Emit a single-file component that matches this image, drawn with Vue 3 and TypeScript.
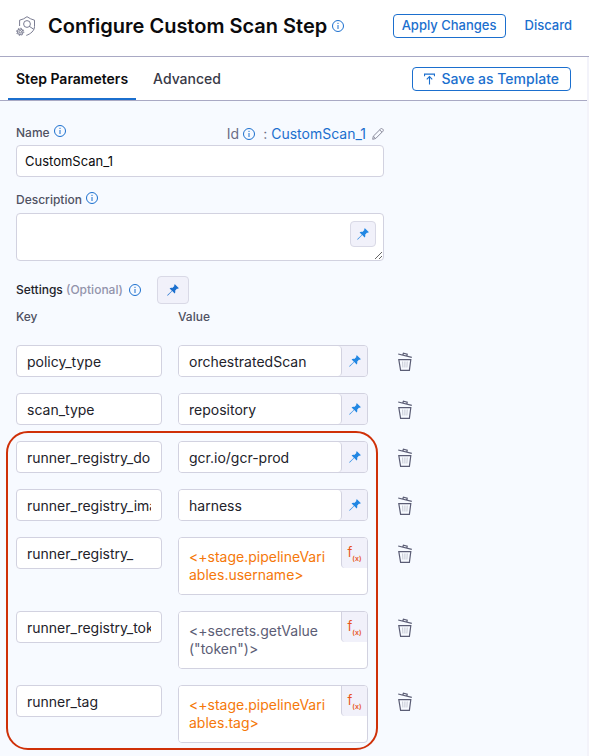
<script setup lang="ts">
import { ref } from 'vue'

type Kind = 'fixed' | 'expression' | 'secret'

interface Setting {
  id: string
  name: string
  value: string
  kind: Kind
}

const name = ref('CustomScan_1')
const description = ref('')
const activeTab = ref('Step Parameters')
const tabs = ['Step Parameters', 'Advanced']

const groups = ref<{ marked: boolean; items: Setting[] }[]>([
  {
    marked: false,
    items: [
      { id: 's1', name: 'policy_type', value: 'orchestratedScan', kind: 'fixed' },
      { id: 's2', name: 'scan_type', value: 'repository', kind: 'fixed' },
    ],
  },
  {
    marked: true,
    items: [
      { id: 's3', name: 'runner_registry_do', value: 'gcr.io/gcr-prod', kind: 'fixed' },
      { id: 's4', name: 'runner_registry_image', value: 'harness', kind: 'fixed' },
      { id: 's5', name: 'runner_registry_', value: '<+stage.pipelineVariables.username>', kind: 'expression' },
      { id: 's6', name: 'runner_registry_token', value: '<+secrets.getValue\n("token")>', kind: 'secret' },
      { id: 's7', name: 'runner_tag', value: '<+stage.pipelineVariables.tag>', kind: 'expression' },
    ],
  },
])

function removeSetting(id: string): void {
  groups.value.forEach((g) => {
    g.items = g.items.filter((s) => s.id !== id)
  })
}
</script>

<template>
  <svg class="defs" aria-hidden="true">
    <symbol id="i-info" viewBox="0 0 12 12">
      <circle cx="6" cy="6" r="5.5" fill="none" stroke="currentColor" />
      <path d="M6 5v4M6 2.8v1.2" fill="none" stroke="currentColor" />
    </symbol>
    <symbol id="i-pin" viewBox="0 0 12 12">
      <path
        fill="currentColor"
        d="M7.9 0.3 11.7 4.1 11 4.9 10.1 4.6 8.1 6.7C8.5 7.8 8.3 8.7 7.6 9.4L5.3 7.1 0.9 11.6 0.2 11.8 0.4 11.1 4.9 6.7 2.6 4.4C3.3 3.7 4.2 3.5 5.3 3.9L7.4 1.9 7.1 1Z"
      />
    </symbol>
    <symbol id="i-trash" viewBox="0 0 16 20">
      <path
        fill="none"
        stroke="currentColor"
        stroke-width="1.2"
        d="M1.2 2 14.8 5.4M5.8 3 6.4 1.200 10.200 2.200 9.800 4M1.800 7.600H13.800L12.400 18.400H3.600Z"
      />
      <path fill="none" stroke="currentColor" stroke-width="0.8" opacity="0.4" d="M5.600 9.500 5.900 15.500M7.900 9.500V15.500M10.200 9.500 9.900 15.500" />
    </symbol>
  </svg>

  <main class="page">
    <header class="header">
      <svg class="step-icon" viewBox="0 0 20 20" fill="none" stroke="#6b6d85" stroke-width="0.9" aria-hidden="true">
        <path d="M3.6 10V4.2Q8 3.2 11 0.7Q14.500 3.200 18.500 4.200V10.500C18.500 14.800 14.500 18 10.300 19.400" />
        <circle cx="11" cy="8" r="3.400" />
        <path d="M13.400 10.400 17.800 13.300" />
        <circle cx="4.200" cy="15.800" r="1.300" />
        <circle cx="4.200" cy="15.800" r="2.800" />
        <circle cx="4.200" cy="15.800" r="3.600" stroke-dasharray="1.400 1.400" />
      </svg>
      <h1 class="title">Configure Custom Scan Step</h1>
      <svg class="info" aria-hidden="true"><use href="#i-info" /></svg>
      <div class="actions">
        <button type="button" class="btn">Apply Changes</button>
        <button type="button" class="link-btn">Discard</button>
      </div>
    </header>

    <div class="body">
      <nav class="tabs">
        <button
          v-for="tab in tabs"
          :key="tab"
          type="button"
          class="tab"
          :class="{ active: activeTab === tab }"
          @click="activeTab = tab"
        >
          {{ tab }}
        </button>
        <button type="button" class="btn save">
          <svg class="up" viewBox="0 0 12 12" fill="none" stroke="currentColor" stroke-width="1.2" aria-hidden="true">
            <path d="M0.600 3V0.700H11.400V3M6 12V3.500M3 6.300 6 3.300 9 6.300" />
          </svg>
          Save as Template
        </button>
      </nav>

      <form class="form" @submit.prevent>
        <div class="name-head">
          <label class="label" for="name">Name</label>
          <svg class="info" aria-hidden="true"><use href="#i-info" /></svg>
          <div class="ident">
            <span>Id</span>
            <svg class="info" aria-hidden="true"><use href="#i-info" /></svg>
            <span class="colon">:</span>
            <a href="#name">{{ name }}</a>
            <button type="button" class="bare" aria-label="Edit Id">
              <svg class="pencil" viewBox="0 0 12 12" fill="none" stroke="#8a8b9c" aria-hidden="true">
                <path d="M0.700 11.300 1.300 8.200 8.500 1C9.200 0.300 10 0.400 10.600 1C11.400 1.700 11.600 2.500 10.900 3.300L3.700 10.500ZM7.700 1.900 10 4.200M1.500 8.400 3.500 10.300" />
              </svg>
            </button>
          </div>
        </div>
        <input id="name" v-model="name" class="box name" type="text" />

        <div class="desc-head">
          <label class="label" for="description">Description</label>
          <svg class="info" aria-hidden="true"><use href="#i-info" /></svg>
        </div>
        <div class="desc">
          <textarea id="description" v-model="description" class="box area"></textarea>
          <button type="button" class="pin small" aria-label="Description input type">
            <svg class="pin-icon" aria-hidden="true"><use href="#i-pin" /></svg>
          </button>
        </div>

        <div class="settings-head">
          <h2 class="label strong">Settings <span class="optional">(Optional)</span></h2>
          <svg class="info" aria-hidden="true"><use href="#i-info" /></svg>
          <button type="button" class="pin" aria-label="Settings input type">
            <svg class="pin-icon dark" aria-hidden="true"><use href="#i-pin" /></svg>
          </button>
        </div>

        <div class="row columns">
          <span class="label">Key</span>
          <span class="label">Value</span>
        </div>

        <div v-for="(group, g) in groups" :key="g" class="group" :class="{ marked: group.marked }">
          <div v-for="item in group.items" :key="item.id" class="row">
            <input v-model="item.name" class="box key" type="text" aria-label="Key" />
            <div class="value" :class="item.kind">
              <input v-if="item.kind === 'fixed'" v-model="item.value" type="text" aria-label="Value" />
              <textarea v-else v-model="item.value" rows="2" spellcheck="false" aria-label="Value"></textarea>
              <button type="button" class="mode" aria-label="Value input type">
                <svg v-if="item.kind === 'fixed'" class="pin-icon" aria-hidden="true"><use href="#i-pin" /></svg>
                <span v-else class="fx">f<sub>(x)</sub></span>
              </button>
            </div>
            <button type="button" class="bare trash" aria-label="Remove setting" @click="removeSetting(item.id)">
              <svg aria-hidden="true"><use href="#i-trash" /></svg>
            </button>
          </div>
        </div>
      </form>
    </div>
  </main>
</template>

<style>
body {
  background: #f7faff;
}
</style>

<style scoped>
.page,
.page button,
.page input,
.page textarea {
  font-family: Inter, 'Liberation Sans', sans-serif;
  box-sizing: border-box;
}
.page {
  color: #22222a;
}
button {
  margin: 0;
  cursor: pointer;
}
.defs {
  display: none;
}
.header {
  display: flex;
  align-items: center;
  height: 57px;
  padding: 0 17px 4px 16px;
  box-sizing: border-box;
  background: #fff;
  border-bottom: 1px solid #a9a9c4;
}
.step-icon {
  width: 20px;
  height: 20px;
  flex: none;
}
.title {
  margin: 0 5px 0 12px;
  font-size: 20px;
  line-height: 28px;
  font-weight: 600;
  color: #0b0b0d;
  white-space: nowrap;
}
.info {
  width: 12px;
  height: 12px;
  flex: none;
  color: #1b6fce;
}
.actions {
  display: flex;
  align-items: center;
  gap: 19px;
  margin-left: auto;
}
.btn,
.link-btn {
  display: flex;
  align-items: center;
  justify-content: center;
  height: 24px;
  padding: 0 8px 2px;
  font-size: 13px;
  line-height: 16px;
  font-weight: 500;
  color: #1b6fce;
  background: #fff;
  border: 1px solid #1b6fce;
  border-radius: 4px;
  white-space: nowrap;
}
.link-btn {
  border: 0;
  padding: 0 0 2px;
}
.body {
  border-right: 2px solid #f3f3fa;
}
.tabs {
  display: flex;
  align-items: center;
  height: 44px;
  padding: 0 16px 0 8px;
  box-sizing: border-box;
  background: #fff;
  border-bottom: 1px solid #a9a9c4;
}
.tab {
  height: 43px;
  padding: 2px 8px 0;
  font-size: 14px;
  font-weight: 500;
  color: #383946;
  background: none;
  border: 0;
  border-bottom: 2px solid transparent;
  margin-right: 9px;
}
.tab.active {
  font-weight: 600;
  color: #0b0b0d;
  border-bottom-color: #1b6fce;
}
.btn.save {
  margin-left: auto;
  padding: 0 11px;
  font-size: 14px;
}
.up {
  width: 11px;
  height: 12px;
  margin-right: 7px;
}
.form {
  padding: 24px 16px 13px;
}
.name-head,
.desc {
  max-width: 368px;
}
.name-head {
  display: flex;
  align-items: flex-start;
  margin-bottom: 2px;
}
.label {
  margin: 0 4px 0 0;
  font-size: 12px;
  line-height: 16px;
  font-weight: 500;
  color: #4f5162;
}
.label.strong {
  margin-right: 6px;
  color: #22222a;
}
.optional {
  color: #9293ab;
}
.ident {
  display: flex;
  align-items: center;
  margin-left: auto;
  font-size: 14px;
  line-height: 18px;
  color: #6b6d85;
}
.ident .info {
  margin: 0 8px 0 4px;
}
.colon {
  margin-right: 4px;
}
.ident a {
  color: #1b6fce;
  text-decoration: none;
}
.bare {
  display: flex;
  align-items: center;
  justify-content: center;
  padding: 0;
  background: none;
  border: 0;
}
.pencil {
  width: 12px;
  height: 12px;
  margin-left: 6px;
}
.box {
  display: block;
  width: 100%;
  height: 32px;
  margin: 0;
  font-size: 14px;
  color: #22222a;
  background: #fff;
  border: 1px solid #d2d2e0;
  border-radius: 4px;
  outline-color: #1b6fce;
}
.name {
  max-width: 368px;
  padding: 0 8px;
  font-size: 13px;
  color: #0b0b0d;
}
.desc-head {
  display: flex;
  align-items: flex-start;
  margin: 15px 0 5px;
}
.desc {
  position: relative;
}
.area {
  height: 48px;
  padding: 8px 40px 8px 8px;
}
.pin {
  display: flex;
  align-items: center;
  justify-content: center;
  width: 32px;
  height: 28px;
  padding: 0;
  background: #f1f1fa;
  border: 1px solid #d9d9e6;
  border-radius: 4px;
}
.pin.small {
  position: absolute;
  top: 8px;
  right: 8px;
  width: 26px;
  height: 26px;
}
.pin-icon {
  width: 12px;
  height: 12px;
  color: #2287e3;
}
.pin-icon.dark {
  color: #1b6fce;
}
.settings-head {
  display: flex;
  align-items: center;
  margin: 15px 0 5px;
}
.settings-head .pin {
  margin-left: 16px;
}
.row {
  display: grid;
  grid-template-columns: 146px 190px 42px;
  column-gap: 16px;
  align-items: start;
}
.columns {
  margin-bottom: 20px;
}
.trash {
  height: 32px;
  padding-top: 2px;
}
.trash svg {
  width: 16px;
  height: 20px;
  color: #5b5d75;
}
.group {
  display: grid;
  gap: 16px;
  margin-bottom: 16px;
}
.group:last-child {
  margin-bottom: 0;
}
.marked {
  position: relative;
  width: 352px;
}
.marked::before {
  content: '';
  position: absolute;
  inset: -10px -10px -7px;
  border: 2px solid #cf3008;
  border-radius: 22px;
  pointer-events: none;
}
.key {
  padding: 0 10px;
}
.value {
  display: flex;
  align-items: flex-start;
  box-sizing: border-box;
  height: 32px;
  overflow: hidden;
  background: #f1f1fa;
  border: 1px solid #d2d2e0;
  border-radius: 4px;
}
.value input,
.value textarea {
  flex: 1;
  min-width: 0;
  margin: 0;
  height: 30px;
  padding: 0 10px;
  font-size: 14px;
  color: #22222a;
  background: #fff;
  border: 0;
  border-right: 1px solid #d2d2e0;
  border-radius: 0 4px 4px 0;
}
.value.expression,
.value.secret {
  height: 58px;
  background: #fff;
}
.value textarea {
  height: 56px;
  padding: 10px;
  line-height: 18px;
  color: #f5780a;
  border-right: 0;
  resize: none;
  overflow: hidden;
  overflow-wrap: anywhere;
}
.value.secret textarea {
  color: #5b5d75;
}
.mode {
  display: flex;
  align-items: center;
  justify-content: center;
  flex: none;
  width: 25px;
  height: 30px;
  padding: 0;
  background: #f1f1fa;
  border: 0;
}
.expression .mode,
.secret .mode {
  width: 26px;
  border-left: 1px solid #d2d2e0;
  border-bottom-left-radius: 4px;
}
.fx {
  font-size: 13px;
  line-height: 16px;
  color: #e8551c;
}
.fx sub {
  font-size: 7px;
  font-weight: 600;
  line-height: 8px;
}
</style>
